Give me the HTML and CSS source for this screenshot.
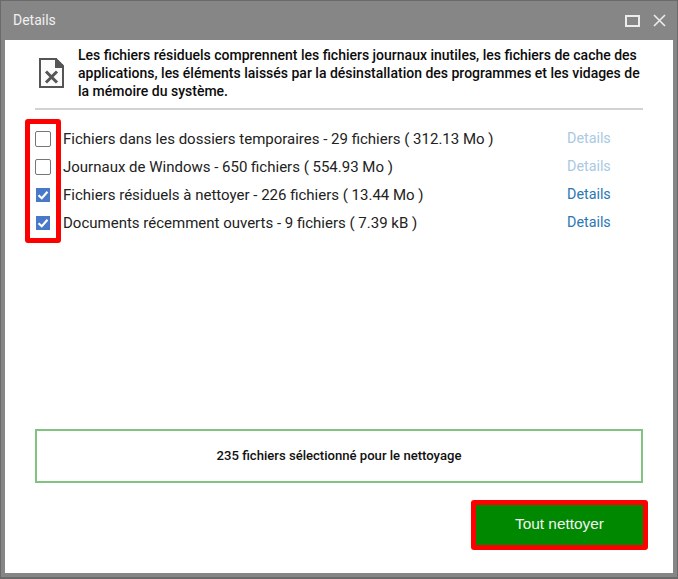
FILE: index.html
```html
<!DOCTYPE html>
<html lang="fr">
<head>
<meta charset="utf-8">
<title>Details</title>
<link rel="stylesheet" href="styles.css">
</head>
<body>
<div class="window">
  <header class="titlebar">
    <span class="title">Details</span>
    <div class="controls">
      <svg class="ctl-max" width="15" height="12" viewBox="0 0 15 12"><rect x="1" y="1" width="13" height="10" fill="none" stroke="#ececec" stroke-width="2"/></svg>
      <svg class="ctl-close" width="13" height="13" viewBox="0 0 13 13"><path d="M1 1L12 12M12 1L1 12" fill="none" stroke="#ececec" stroke-width="1.6"/></svg>
    </div>
  </header>
  <main class="content">
    <section class="intro">
      <svg class="file-icon" width="25" height="30" viewBox="0 0 25 30"><path d="M1 1H17L24 8V29H1Z" fill="#fbfbfb" stroke="#555" stroke-width="2"/><path d="M16 0H18V2H20V4H22V6H24V8H25V10H16Z" fill="#555"/><path d="M7 13.5L18 24.5M18 13.5L7 24.5" fill="none" stroke="#555" stroke-width="3"/></svg>
      <p class="intro-text">Les fichiers résiduels comprennent les fichiers journaux inutiles, les fichiers de cache des applications, les éléments laissés par la désinstallation des programmes et les vidages de la mémoire du système.</p>
    </section>
    <ul class="list">
      <li class="row"><span class="check"></span><span class="label">Fichiers dans les dossiers temporaires - 29 fichiers ( 312.13 Mo )</span><a class="link off">Details</a></li>
      <li class="row"><span class="check"></span><span class="label">Journaux de Windows - 650 fichiers ( 554.93 Mo )</span><a class="link off">Details</a></li>
      <li class="row"><span class="check on"><svg width="14" height="14" viewBox="0 0 14 14"><path d="M2.5 7.2L5.8 10.2L11.5 3.8" fill="none" stroke="#fff" stroke-width="2.2"/></svg></span><span class="label">Fichiers résiduels à nettoyer - 226 fichiers ( 13.44 Mo )</span><a class="link">Details</a></li>
      <li class="row"><span class="check on"><svg width="14" height="14" viewBox="0 0 14 14"><path d="M2.5 7.2L5.8 10.2L11.5 3.8" fill="none" stroke="#fff" stroke-width="2.2"/></svg></span><span class="label">Documents récemment ouverts - 9 fichiers ( 7.39 kB )</span><a class="link">Details</a></li>
      <li class="mark-list"></li>
    </ul>
    <div class="status">235 fichiers sélectionné pour le nettoyage</div>
    <div class="actions"><button class="clean">Tout nettoyer</button></div>
  </main>
</div>
</body>
</html>
```
FILE: styles.css
```css
* { box-sizing: border-box; }
html, body { margin: 0; padding: 0; }
body { width: 678px; height: 579px; overflow: hidden; background: #fff; font-family: Roboto, sans-serif; color: #111; }
.window { width: 678px; height: 579px; display: flex; flex-direction: column; background: #868686; border: 1px solid #6a6a6a; border-bottom-width: 2px; padding: 0 4px 4px; }
.titlebar { height: 39px; flex: none; display: flex; align-items: center; justify-content: space-between; padding: 0 7px 0 8px; color: #f0f0f0; }
.title { font-size: 14px; padding-bottom: 2px; }
.controls { display: flex; align-items: center; gap: 13px; }
.content { position: relative; flex: 1; background: #fff; display: flex; flex-direction: column; padding: 0 30px; }
.intro { display: flex; align-items: flex-start; height: 70px; border-bottom: 2px solid #d2d2d2; padding-top: 6px; }
.file-icon { flex: none; margin: 12px 14px 0 4px; width: 25px; height: 30px; }
.intro-text { margin: 0; font-size: 14px; font-weight: 500; line-height: 18px; color: #0c0c0c; }
.list { list-style: none; margin: 0; padding: 15px 0 0; height: 319px; position: relative; }
.row { height: 28px; display: flex; align-items: center; font-size: 15px; color: #222; }
.check { width: 16px; height: 16px; flex: none; border: 1px solid #767676; border-radius: 2px; background: #fff; margin-right: 12px; display: flex; align-items: center; justify-content: center; }
.check.on { background: #4a78c8; border: 0; width: 14px; height: 14px; margin: 0 13px 0 1px; border-radius: 0; }
.label { flex: 1; }
.link { width: 76px; font-size: 14.3px; color: #2a77b4; padding-bottom: 2px; }
.link.off { color: #a9c9e2; }
.mark-list { position: absolute; left: -10px; top: 9px; width: 36px; height: 124px; border: 5px solid #f00; border-radius: 3px; }
.status { height: 54px; flex: none; border: 2px solid #80c480; display: flex; align-items: center; justify-content: center; font-size: 13.1px; font-weight: 500; color: #111; padding-bottom: 1px; }
.actions { display: flex; justify-content: flex-end; padding-top: 17px; margin-right: -5px; }
.clean { width: 177px; height: 50px; background: #008800; border: 5px solid #f00; border-radius: 3px; color: #f2f2f2; font-family: "Liberation Sans", sans-serif; font-size: 15.4px; padding: 0 0 2px; }
```
